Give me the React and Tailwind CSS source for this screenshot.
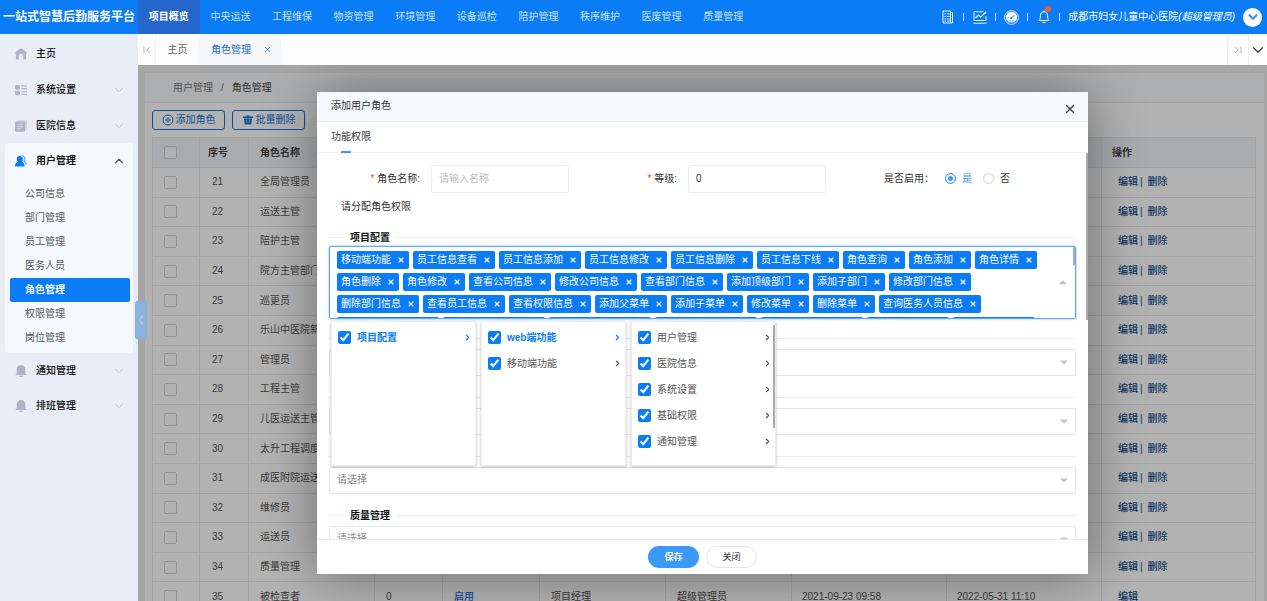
import React from 'react';
import { FaCaretDown, FaCaretUp } from 'react-icons/fa';
import { ChevronDown, ChevronLeft, ChevronRight, ChevronUp, X } from 'lucide-react';

const navItems = ['项目概览', '中央运送', '工程维保', '物资管理', '环境管理', '设备巡检', '陪护管理', '秩序维护', '医废管理', '质量管理'];

const userMenu = ['公司信息', '部门管理', '员工管理', '医务人员', '角色管理', '权限管理', '岗位管理'];

const roles = [
    { id: 21, name: '全局管理员' },
    { id: 22, name: '运送主管' },
    { id: 23, name: '陪护主管' },
    { id: 24, name: '院方主管部门' },
    { id: 25, name: '巡更员' },
    { id: 26, name: '乐山中医院新' },
    { id: 27, name: '管理员' },
    { id: 28, name: '工程主管' },
    { id: 29, name: '儿医运送主管' },
    { id: 30, name: '太升工程调度' },
    { id: 31, name: '成医附院运送' },
    { id: 32, name: '维修员' },
    { id: 33, name: '运送员' },
    { id: 34, name: '质量管理' },
    { id: 35, name: '被检查者', locked: true },
];

const tags = [
    '移动端功能', '员工信息查看', '员工信息添加', '员工信息修改', '员工信息删除', '员工信息下线', '角色查询', '角色添加', '角色详情',
    '角色删除', '角色修改', '查看公司信息', '修改公司信息', '查看部门信息', '添加顶级部门', '添加子部门', '修改部门信息',
    '删除部门信息', '查看员工信息', '查看权限信息', '添加父菜单', '添加子菜单', '修改菜单', '删除菜单', '查询医务人员信息',
    '添加医务人员信息', '修改医务人员信息', '删除医务人员信息', '查看医务人员信息', '导出医务人员信息', '查询岗位信息', '添加岗位信息',
];

const cascader = [
    [{ label: '项目配置', active: true }],
    [{ label: 'web端功能', active: true }, { label: '移动端功能' }],
    [{ label: '用户管理' }, { label: '医院信息' }, { label: '系统设置' }, { label: '基础权限' }, { label: '通知管理' }, { label: '排班管理' }],
];

const otherSections = ['中央运送', '工程维保', '物资管理', '质量管理'];

function HomeIcon() {
    return (
        <svg viewBox="0 0 12 12" className="size-3" fill="#b0b3c6">
            <path d="M5.2.5a1.3 1.3 0 0 1 1.6 0l4.6 3.6c.6.5.4 1.2-.3 1.3V10.5a1 1 0 0 1-1 1H8.2V8a2.2 2.2 0 0 0-4.4 0v3.5H1.9a1 1 0 0 1-1-1V5.4C.2 5.3 0 4.6.6 4.1z" />
        </svg>
    );
}

function SettingIcon() {
    return (
        <svg viewBox="0 0 12 12" className="size-3" fill="#b0b3c6">
            <rect x="0" y="1" width="5" height="4.5" rx="1.2" />
            <rect x="0" y="6.8" width="5" height="4.5" rx="1.2" />
            <path d="M6.5 1.2h5.5v1.2H6.5zM6.5 4h5.5v1.2H6.5zM6.5 7h5.5v1.2H6.5zM6.5 9.8h5.5V11H6.5z" />
        </svg>
    );
}

function HospitalIcon() {
    return (
        <svg viewBox="0 0 12 12" className="size-3">
            <rect x="2" y="0.3" width="10" height="10" rx="1.5" fill="#cfd1de" />
            <rect x="0" y="1.5" width="10" height="10.2" rx="1.5" fill="#b0b3c6" />
            <path d="M2 4.3h6M2 6.5h6M2 8.7h4M6 3v6" stroke="#d8dae6" strokeWidth="0.8" fill="none" />
        </svg>
    );
}

function UsersIcon() {
    return (
        <svg viewBox="0 0 12 12" className="size-3">
            <path d="M7 .9a2.6 2.6 0 0 1 2.3 4.3c-.4.7 0 1.2.8 2L11.6 9.5" fill="none" stroke="#5aa8fb" strokeWidth="1.2" />
            <path d="M4.8 1a3 3 0 0 1 3 3c0 1.3-.5 2.2-1.2 2.8 1.7.7 3 1.7 3 4.7H0C0 8.5 1.3 7.5 3 6.8 2.3 6.2 1.8 5.3 1.8 4a3 3 0 0 1 3-3z" fill="#0a7cf6" />
        </svg>
    );
}

function BellSolidIcon() {
    return (
        <svg viewBox="0 0 12 12" className="size-3" fill="#b0b3c6">
            <path d="M6 0a4.3 4.3 0 0 1 4.3 4.3V8.5l1.2 1v.5H.5v-.5l1.2-1V4.3A4.3 4.3 0 0 1 6 0zM4 10.7h4v.3a1 1 0 0 1-1 1H5a1 1 0 0 1-1-1z" />
        </svg>
    );
}

function DocIcon() {
    return (
        <svg viewBox="0 0 12 14" className="h-[14px] w-3" fill="none" stroke="#e4f1ff">
            <path d="M1 1h7.5v12H1zM8.5 2.5h2V13h-2" />
            <path d="M2.5 4H4M2.5 6.5H4M2.5 9H4M2.5 11H4M5 4h2.5M5 6.5h2.5M5 9h2.5M5 11h2.5" />
        </svg>
    );
}

function ChartIcon() {
    return (
        <svg viewBox="0 0 14 13" className="h-[13px] w-[14px]" fill="none" stroke="#e4f1ff">
            <path d="M10.5.7H1v8.8h12V5M.5 12.3h13" />
            <path d="M2.5 7l3-3 2.3 2L12 2" strokeWidth="1.2" />
            <circle cx="12.3" cy="1.8" r="1" fill="#fff" stroke="none" />
        </svg>
    );
}

function GaugeIcon() {
    return (
        <svg viewBox="0 0 15 15" className="size-[15px]">
            <circle cx="7.5" cy="7.5" r="6.9" fill="none" stroke="#cfe6ff" />
            <path d="M7.5 1.8a5.7 5.7 0 0 1 4.7 8.9H2.8A5.7 5.7 0 0 1 7.5 1.8z" fill="#fff" />
            <path d="M4 11.8h7" stroke="#fff" />
            <path d="M7.2 8.2l3-3" stroke="#0a7cf6" />
            <circle cx="7" cy="8.3" r="1" fill="#0a7cf6" />
            <path d="M3.8 7.5h.9M5 4.6l.5.6" stroke="#0a7cf6" strokeWidth="0.6" />
        </svg>
    );
}

function BellIcon() {
    return (
        <svg viewBox="0 0 12 14" className="h-[14px] w-3" fill="none" stroke="#fff">
            <path d="M6 1.8c2.4 0 3.5 1.7 3.5 3.7 0 2.7.5 3.8 1.5 5H1c1-1.2 1.5-2.3 1.5-5 0-2 1.1-3.7 3.5-3.7zM6 .5v1.3M4.5 12.5h3" />
        </svg>
    );
}

function Divider() {
    return <span className="h-2 w-px bg-[#cfe5ff]" />;
}

function Header() {
    return (
        <header className="flex h-[34px] shrink-0 items-center bg-[#0a7cf6] text-white">
            <h1 className="w-[138px] shrink-0 text-center text-[12px] font-bold whitespace-nowrap">一站式智慧后勤服务平台</h1>
            <nav className="grid h-full w-[616px] shrink-0 grid-cols-10">
                {navItems.map((item, i) => (
                    <a
                        key={item}
                        href="#"
                        className={i === 0 ? 'flex items-center justify-center bg-[#2466cb] font-bold' : 'flex items-center justify-center text-[#c5e0fd]'}
                    >
                        {item}
                    </a>
                ))}
            </nav>
            <div className="ml-auto flex items-center gap-2 pr-[5px] whitespace-nowrap">
                <button aria-label="文档" className="flex w-[15px] justify-center"><DocIcon /></button>
                <Divider />
                <button aria-label="统计" className="flex w-[15px] justify-center"><ChartIcon /></button>
                <Divider />
                <button aria-label="仪表盘" className="flex w-[15px] justify-center"><GaugeIcon /></button>
                <Divider />
                <button aria-label="消息" className="relative flex w-[15px] justify-center">
                    <BellIcon />
                    <span className="absolute -top-1 right-0 size-[6px] rounded-full bg-[#ff5722]" />
                </button>
                <Divider />
                <span>成都市妇女儿童中心医院<em>(超级管理员)</em></span>
                <button aria-label="展开" className="flex size-[19px] items-center justify-center rounded-full bg-white text-[#3d97f7]">
                    <ChevronDown size={14} strokeWidth={4} />
                </button>
            </div>
        </header>
    );
}

function MenuItem({ icon, label, arrow, open }) {
    return (
        <a href="#" className="flex h-[35px] items-center pr-3 pl-[15px] font-medium text-[#111]">
            {icon}
            <span className={open ? 'ml-[9px] font-bold' : 'ml-[9px]'}>{label}</span>
            {arrow && (open
                ? <ChevronUp size={14} strokeWidth={2} className="ml-auto text-[#555]" />
                : <ChevronDown size={14} strokeWidth={1.5} className="ml-auto text-[#b9bcc8]" />)}
        </a>
    );
}

function Sidebar() {
    return (
        <aside className="flex w-[138px] shrink-0 flex-col bg-[#e9edf6] pt-[2px]">
            <div className="flex flex-col gap-px">
                <MenuItem icon={<HomeIcon />} label="主页" />
                <MenuItem icon={<SettingIcon />} label="系统设置" arrow />
                <MenuItem icon={<HospitalIcon />} label="医院信息" arrow />
            </div>
            <div className="mx-[5px] rounded bg-[#f5f9fd] pb-[3px]">
                <div className="-mx-[5px]">
                    <MenuItem icon={<UsersIcon />} label="用户管理" arrow open />
                </div>
                <ul className="pt-1">
                    {userMenu.map((item) => (
                        <li key={item} className="mr-[3px] ml-[5px]">
                            <a
                                href="#"
                                className={item === '角色管理'
                                    ? 'flex h-6 items-center rounded-xs bg-[#0a7cf6] pl-[15px] font-bold text-white'
                                    : 'flex h-6 items-center pl-[15px] text-[#555]'}
                            >
                                {item}
                            </a>
                        </li>
                    ))}
                </ul>
            </div>
            <MenuItem icon={<BellSolidIcon />} label="通知管理" arrow />
            <MenuItem icon={<BellSolidIcon />} label="排班管理" arrow />
        </aside>
    );
}

function TabBar() {
    return (
        <div className="flex h-[31px] shrink-0 items-stretch bg-[#fdfdfd] text-[#666]">
            <button aria-label="左移" className="flex w-[18px] items-center justify-center border-r border-[#f3f3f3] text-[#bbb]">
                <svg viewBox="0 0 8 8" className="size-2" fill="none" stroke="currentColor"><path d="M1 .5v7M7 1L4 4l3 3" /></svg>
            </button>
            <a href="#" className="flex w-[43px] items-center justify-center">主页</a>
            <a href="#" className="flex w-[82px] items-center justify-between bg-[#f5f6f7] pr-[9px] pl-3 text-[#2a6fd0]">
                角色管理
                <X size={9} strokeWidth={2} />
            </a>
            <button aria-label="右移" className="ml-auto flex w-[22px] items-center justify-center border-x border-[#f0f0f0] text-[#bbb]">
                <svg viewBox="0 0 8 8" className="size-2" fill="none" stroke="currentColor"><path d="M7 .5v7M1 1l3 3-3 3" /></svg>
            </button>
            <button aria-label="更多" className="flex w-[18px] items-center justify-center text-[#333]">
                <ChevronDown size={18} strokeWidth={1.5} />
            </button>
        </div>
    );
}

function TableCheckbox({ label }) {
    return <input type="checkbox" aria-label={label} className="block size-[13px] appearance-none rounded-xs border border-[#d2d2d2] bg-white" />;
}

function RolePage() {
    const cell = 'border border-[#eaeaea] px-[11px] py-0 whitespace-nowrap overflow-hidden';
    return (
        <div className="mt-2 mr-[3px] ml-[7px] bg-white">
            <div className="flex h-[30px] items-center gap-2 border-b border-[#eee] bg-[#f7f9fb] pl-7 text-[#777]">
                <a href="#">用户管理</a>
                <span>/</span>
                <span className="text-[#444]">角色管理</span>
            </div>
            <div className="pt-[7px] pr-2 pl-[7px]">
                <div className="flex gap-[7px] text-[#1b74e0]">
                    <button className="flex h-5 w-[73px] items-center justify-center gap-[2px] rounded-[3px] border border-[#1b74e0]">
                        <svg viewBox="0 0 12 12" className="size-3" fill="none" stroke="currentColor">
                            <circle cx="6" cy="6" r="5" />
                            <path d="M6 3v6M3 6h6" />
                        </svg>
                        添加角色
                    </button>
                    <button className="flex h-5 w-[73px] items-center justify-center gap-[2px] rounded-[3px] border border-[#1b74e0]">
                        <svg viewBox="0 0 12 12" className="size-3" fill="currentColor">
                            <path d="M4.5 1.5h3v1H11v1.5H1V2.5h3.5zM2 4.5h8L9.3 10.5H2.7z" />
                            <path d="M4.7 5.5v3.5M7.3 5.5v3.5" stroke="#fff" strokeWidth="0.5" />
                        </svg>
                        批量删除
                    </button>
                </div>
                <table className="mt-[7px] h-[475px] w-full table-fixed border-collapse text-left text-[#555]">
                    <colgroup>
                        <col className="w-[47px]" />
                        <col className="w-[49px]" />
                        <col className="w-[126px]" />
                        <col className="w-[68px]" />
                        <col className="w-[97px]" />
                        <col className="w-[126px]" />
                        <col className="w-[126px]" />
                        <col className="w-[155px]" />
                        <col className="w-[155px]" />
                        <col />
                    </colgroup>
                    <thead className="bg-[#f3f6f9] text-[#444]">
                        <tr className="h-[30px]">
                            <th className={cell}><TableCheckbox label="全选" /></th>
                            <th className="border border-[#eaeaea] px-2">序号</th>
                            <th className={cell}>角色名称</th>
                            <th className={cell}>等级</th>
                            <th className={cell}>状态</th>
                            <th className={cell}>角色类型</th>
                            <th className={cell}>创建人</th>
                            <th className={cell}>创建时间</th>
                            <th className={cell}>更新时间</th>
                            <th className="border border-[#eaeaea] px-[10px]">操作</th>
                        </tr>
                    </thead>
                    <tbody>
                        {roles.map((role) => (
                            <tr key={role.id}>
                                <td className={cell}><TableCheckbox label={role.name} /></td>
                                <td className="border border-[#eaeaea] px-3">{role.id}</td>
                                <td className={cell}>{role.name}</td>
                                <td className={cell}>0</td>
                                <td className={cell}><a href="#" className="font-medium text-[#1b74e0]">启用</a></td>
                                <td className={cell}>项目经理</td>
                                <td className={cell}>超级管理员</td>
                                <td className="border border-[#eaeaea] px-[10px] whitespace-nowrap">2021-09-23 09:58</td>
                                <td className="border border-[#eaeaea] px-[10px] whitespace-nowrap">2022-05-31 11:10</td>
                                <td className="border border-[#eaeaea] px-4 font-medium text-[#15508f]">
                                    <a href="#">编辑</a>
                                    {!role.locked && <><span className="mr-[5px] ml-[2px]">|</span><a href="#">删除</a></>}
                                </td>
                            </tr>
                        ))}
                    </tbody>
                </table>
            </div>
        </div>
    );
}

function SectionTitle({ children }) {
    return (
        <div className="flex items-center gap-[7px] font-bold text-[#111]">
            <span className="h-px w-[14px] bg-[#eee]" />
            <h3 className="leading-4">{children}</h3>
            <span className="h-px flex-1 bg-[#eee]" />
        </div>
    );
}

function CascaderMenu() {
    return (
        <div className="absolute top-full left-[2px] z-10 mt-[2px] flex gap-[5px]">
            {cascader.map((items, col) => (
                <div key={col} className="relative h-[145px] w-[145px] border border-[#eee] bg-white pt-[3px] pb-[5px] shadow-[0_1px_3px_rgba(0,0,0,0.25)]">
                    <ul className="h-full overflow-hidden">
                        {items.map((item) => (
                            <li key={item.label}>
                                <label className={item.active ? 'flex h-[26px] items-center gap-[6px] pr-[3px] pl-[6px] font-bold text-[#0a7cf6]' : 'flex h-[26px] items-center gap-[6px] pr-[3px] pl-[6px] text-[#555]'}>
                                    <input type="checkbox" defaultChecked className="size-[13px] accent-[#0a7cf6]" />
                                    {item.label}
                                    <ChevronRight size={9} strokeWidth={3} className="ml-auto" />
                                </label>
                            </li>
                        ))}
                    </ul>
                    {col === 2 && <span className="absolute top-[3px] right-0 h-[103px] w-[2px] bg-[#aaa]" />}
                </div>
            ))}
        </div>
    );
}

function TagSelect() {
    return (
        <div className="relative">
            <div className="relative h-[73px] overflow-hidden rounded-xs border border-[#5ea9f8] pt-1 pr-[30px] pl-[7px] shadow-[0_0_2px_#5ea9f8]">
                <div className="flex flex-wrap gap-1">
                    {tags.map((tag) => (
                        <span key={tag} className="flex h-[18px] items-center gap-[6px] rounded-xs bg-[#0a7cf6] px-1 whitespace-nowrap text-white">
                            {tag}
                            <button aria-label={`移除${tag}`}><X size={8} strokeWidth={3.5} /></button>
                        </span>
                    ))}
                </div>
                <FaCaretUp size={12} className="absolute top-[29px] right-[6px] text-[#c2c2c2]" />
                <span className="absolute top-0 right-0 h-[18px] w-[2px] bg-[#aaa]" />
            </div>
            <CascaderMenu />
        </div>
    );
}

function RoleDialog() {
    return (
        <section role="dialog" aria-labelledby="dialog-title" className="flex h-[90%] w-[771px] max-w-full flex-col bg-white text-[#333] shadow-[1px_1px_50px_rgba(0,0,0,0.4)]">
            <div className="flex h-[30px] shrink-0 items-center justify-between border-b border-[#eceff2] bg-[#f5f9fd] pr-[11px] pl-[14px]">
                <h2 id="dialog-title">添加用户角色</h2>
                <button aria-label="关闭窗口" className="pt-[5px] text-[#444]"><X size={14} strokeWidth={2.5} /></button>
            </div>
            <div className="flex h-[31px] shrink-0 border-b border-[#f0f0f0] px-[14px]">
                <a href="#" className="relative flex items-center">
                    功能权限
                    <span className="absolute -bottom-px left-[10px] h-[2px] w-[10px] bg-[#3b99fc]" />
                </a>
            </div>
            <form className="relative min-h-0 flex-1 overflow-hidden pt-3">
                <span className="absolute top-0 right-0 h-[167px] w-[2px] bg-[#aaa]" />
                <div className="grid grid-cols-3">
                    <div className="flex items-center gap-[11px]">
                        <label htmlFor="role-name" className="w-[103px] text-right"><span className="text-[#f33]">*</span> 角色名称:</label>
                        <input id="role-name" placeholder="请输入名称" className="h-7 w-[138px] rounded-xs border border-[#eee] px-[7px] placeholder:text-[#bbb]" />
                    </div>
                    <div className="flex items-center gap-[11px]">
                        <label htmlFor="role-level" className="w-[103px] text-right"><span className="text-[#f33]">*</span> 等级:</label>
                        <input id="role-level" defaultValue="0" className="h-7 w-[138px] rounded-xs border border-[#eee] px-[7px]" />
                    </div>
                    <div className="flex items-center gap-[11px]">
                        <span className="w-[103px] text-right">是否启用：</span>
                        <label className="flex items-center gap-[6px] text-[#3b99fc]">
                            <input type="radio" name="enabled" defaultChecked className="size-[11px] appearance-none rounded-full border border-[#d2d2d2] checked:border-[#3b99fc] checked:bg-[#3b99fc] checked:shadow-[inset_0_0_0_2px_#fff]" />
                            是
                        </label>
                        <label className="flex items-center gap-[6px]">
                            <input type="radio" name="enabled" className="size-[11px] appearance-none rounded-full border border-[#d2d2d2] checked:border-[#3b99fc] checked:bg-[#3b99fc] checked:shadow-[inset_0_0_0_2px_#fff]" />
                            否
                        </label>
                    </div>
                </div>
                <p className="mt-[6px] pl-6 leading-4">请分配角色权限</p>
                <div className="px-3 pt-[15px]">
                    <SectionTitle>项目配置</SectionTitle>
                    <TagSelect />
                    {otherSections.map((name) => (
                        <div key={name} className="pt-3 pb-[2px]">
                            <SectionTitle>{name}</SectionTitle>
                            <div className="relative mt-[2px]">
                                <select aria-label={name} className="block h-[27px] w-full appearance-none rounded-xs border border-[#e6e6e6] bg-white px-[7px] text-[#888]">
                                    <option>请选择</option>
                                </select>
                                <FaCaretDown size={12} className="absolute top-[7px] right-[6px] text-[#c2c2c2]" />
                            </div>
                        </div>
                    ))}
                </div>
            </form>
            <div className="flex h-[35px] shrink-0 items-center justify-center gap-[7px] border-t border-[#e8e8e8] text-[9px]">
                <button className="h-[22px] w-[51px] rounded-full bg-[#3b99fc] font-bold text-white">保存</button>
                <button className="h-[22px] w-[51px] rounded-full border border-[#e6e6e6] bg-white">关闭</button>
            </div>
        </section>
    );
}

export default function App() {
    return (
        <div className="flex h-screen flex-col overflow-hidden font-['Liberation_Sans','Noto_Sans_CJK_SC',sans-serif] text-[10px] leading-4">
            <Header />
            <div className="flex min-h-0 flex-1">
                <Sidebar />
                <div className="flex min-w-0 flex-1 flex-col">
                    <TabBar />
                    <main className="relative min-h-0 flex-1 bg-[#eee]">
                        <div className="h-full overflow-hidden">
                            <RolePage />
                        </div>
                        <div className="absolute inset-0 flex items-center justify-center overflow-hidden bg-black/30">
                            <RoleDialog />
                        </div>
                        <button aria-label="收起菜单" className="absolute top-[236px] -left-[3px] flex h-[38px] w-3 items-center justify-center rounded-xs bg-[#8bb2dd] text-[#b9c6d4]">
                            <ChevronLeft size={16} className="shrink-0" />
                        </button>
                    </main>
                </div>
            </div>
        </div>
    );
}
